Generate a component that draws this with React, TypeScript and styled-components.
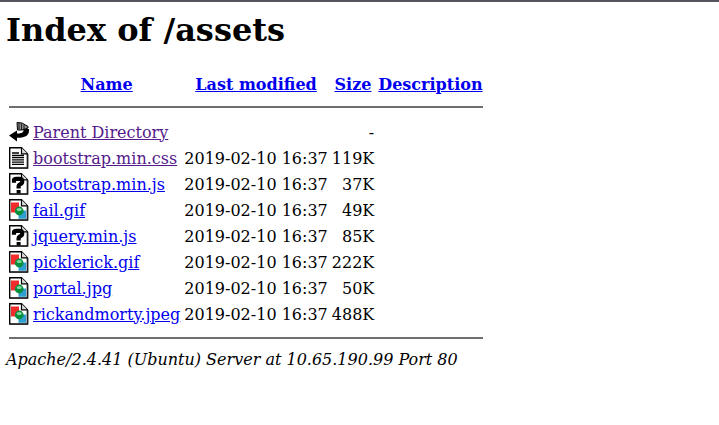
import React from "react";
import styled, { createGlobalStyle } from "styled-components";

const Global = createGlobalStyle`
  html, body { margin: 0; padding: 0; background: #fff; }
  body { font-family: "DejaVu Serif", serif; font-size: 16px; color: #000; }
`;
const TopBar = styled.div`height: 2px; background: #55555d;`;
const Page = styled.div`padding: 0 6px;`;
const Title = styled.h1`font-size: 32px; font-weight: 700; margin: 10px 0 23px; line-height: 37px;`;
const Table = styled.table`border-spacing: 2px; border-collapse: separate; margin-bottom: -1px;`;
const Head = styled.th`padding: 1px; text-align: center; font-weight: 700;`;
const Cell = styled.td<{ $right?: boolean }>`padding: 1px; text-align: ${(p) => (p.$right ? "right" : "left")}; white-space: nowrap; vertical-align: middle;`;
const IconCell = styled.td`padding: 1px; vertical-align: top; line-height: 0;`;
const Link = styled.a<{ $visited?: boolean }>`color: ${(p) => (p.$visited ? "#551a8b" : "#0000ee")}; text-decoration: underline;`;
const Rule = styled.hr`border: 0; height: 2px; margin: 8px 0 9px; background: #6e6e6e;`;
const Footer = styled.address`font-style: italic; margin-top: 0;`;

type Kind = "back" | "text" | "unknown" | "image";

const Sheet = ({ children }: { children?: React.ReactNode }) => (
  <>
    <path d="M.7.7H12.5L18.4 6.8V21H.7Z" fill="#fff" stroke="#000" strokeWidth="1.4" />
    <path d="M12.5 .7V6.8H18.4" fill="#ddd" stroke="#000" strokeWidth="1.2" />
    <path d="M18.9 7V21.5H1.5" fill="none" stroke="#333" strokeWidth="1" />
    {children}
  </>
);

const Icon = ({ kind }: { kind: Kind }) => (
  <svg width="20" height="22" viewBox="0 0 20 22">
    {kind === "back" && (
      <>
        <path d="M8 1.5L13 2l6 3.5v1.5l-6 2H8.5z" fill="#8a8a8a" stroke="#000" strokeWidth="1" />
        <path d="M10 2v6.5M12.5 2.5v6.5M15 4v4" stroke="#222" strokeWidth="1" />
        <path d="M0 14.5L8 9.5v3c4 .5 7-1 6.5-4.5H20c.5 6-3 8.5-9 8.7H8v3.8z" fill="#000" />
      </>
    )}
    {kind === "text" && (
      <Sheet>
        <path d="M3 6H10M3 8.5H15M3 10.7H15M3 12.9H15M3 15.1H15M3 17.3H15" stroke="#000" strokeWidth="1.3" />
      </Sheet>
    )}
    {kind === "unknown" && (
      <Sheet>
        <path
          d="M5 9.8V7.2Q5 5.8 7.5 5.8H10.5Q13.2 5.8 13.2 8V8.8Q13.2 10.4 11.4 11.2Q9.6 12 9.6 13.8V15.6"
          fill="none"
          stroke="#000"
          strokeWidth="4.2"
        />
        <path d="M7.6 17h4v3.4h-4z" fill="#000" />
      </Sheet>
    )}
    {kind === "image" && (
      <Sheet>
        <path d="M2 3.5h8v10H2z" fill="#f22c2c" />
        <path d="M9.5 11.5h7.6v8.3H9.5z" fill="#2e9fd0" />
        <circle cx="10.2" cy="12" r="4.4" fill="#0a8f3c" />
        <ellipse cx="10.2" cy="10.4" rx="2.6" ry="1.5" fill="#7fd6a0" />
      </Sheet>
    )}
  </svg>
);

const rows: { kind: Kind; name: string; date: string; size: string; visited?: boolean }[] = [
  { kind: "text", name: "bootstrap.min.css", date: "2019-02-10 16:37", size: "119K", visited: true },
  { kind: "unknown", name: "bootstrap.min.js", date: "2019-02-10 16:37", size: "37K" },
  { kind: "image", name: "fail.gif", date: "2019-02-10 16:37", size: "49K" },
  { kind: "unknown", name: "jquery.min.js", date: "2019-02-10 16:37", size: "85K" },
  { kind: "image", name: "picklerick.gif", date: "2019-02-10 16:37", size: "222K" },
  { kind: "image", name: "portal.jpg", date: "2019-02-10 16:37", size: "50K" },
  { kind: "image", name: "rickandmorty.jpeg", date: "2019-02-10 16:37", size: "488K" },
];

export default function App() {
  return (
    <>
      <Global />
      <TopBar />
      <Page>
        <Title>Index of /assets</Title>
        <Table>
          <tbody>
            <tr>
              <Head />
              <Head><Link href="#">Name</Link></Head>
              <Head><Link href="#">Last modified</Link></Head>
              <Head><Link href="#">Size</Link></Head>
              <Head><Link href="#">Description</Link></Head>
            </tr>
            <tr><Head colSpan={5}><Rule /></Head></tr>
            <tr>
              <IconCell><Icon kind="back" /></IconCell>
              <Cell><Link href="#" $visited>Parent Directory</Link></Cell>
              <Cell />
              <Cell $right>-</Cell>
              <Cell />
            </tr>
            {rows.map((r) => (
              <tr key={r.name}>
                <IconCell><Icon kind={r.kind} /></IconCell>
                <Cell><Link href="#" $visited={r.visited}>{r.name}</Link></Cell>
                <Cell>{r.date}</Cell>
                <Cell $right>{r.size}</Cell>
                <Cell />
              </tr>
            ))}
            <tr><Head colSpan={5}><Rule /></Head></tr>
          </tbody>
        </Table>
        <Footer>Apache/2.4.41 (Ubuntu) Server at 10.65.190.99 Port 80</Footer>
      </Page>
    </>
  );
}
